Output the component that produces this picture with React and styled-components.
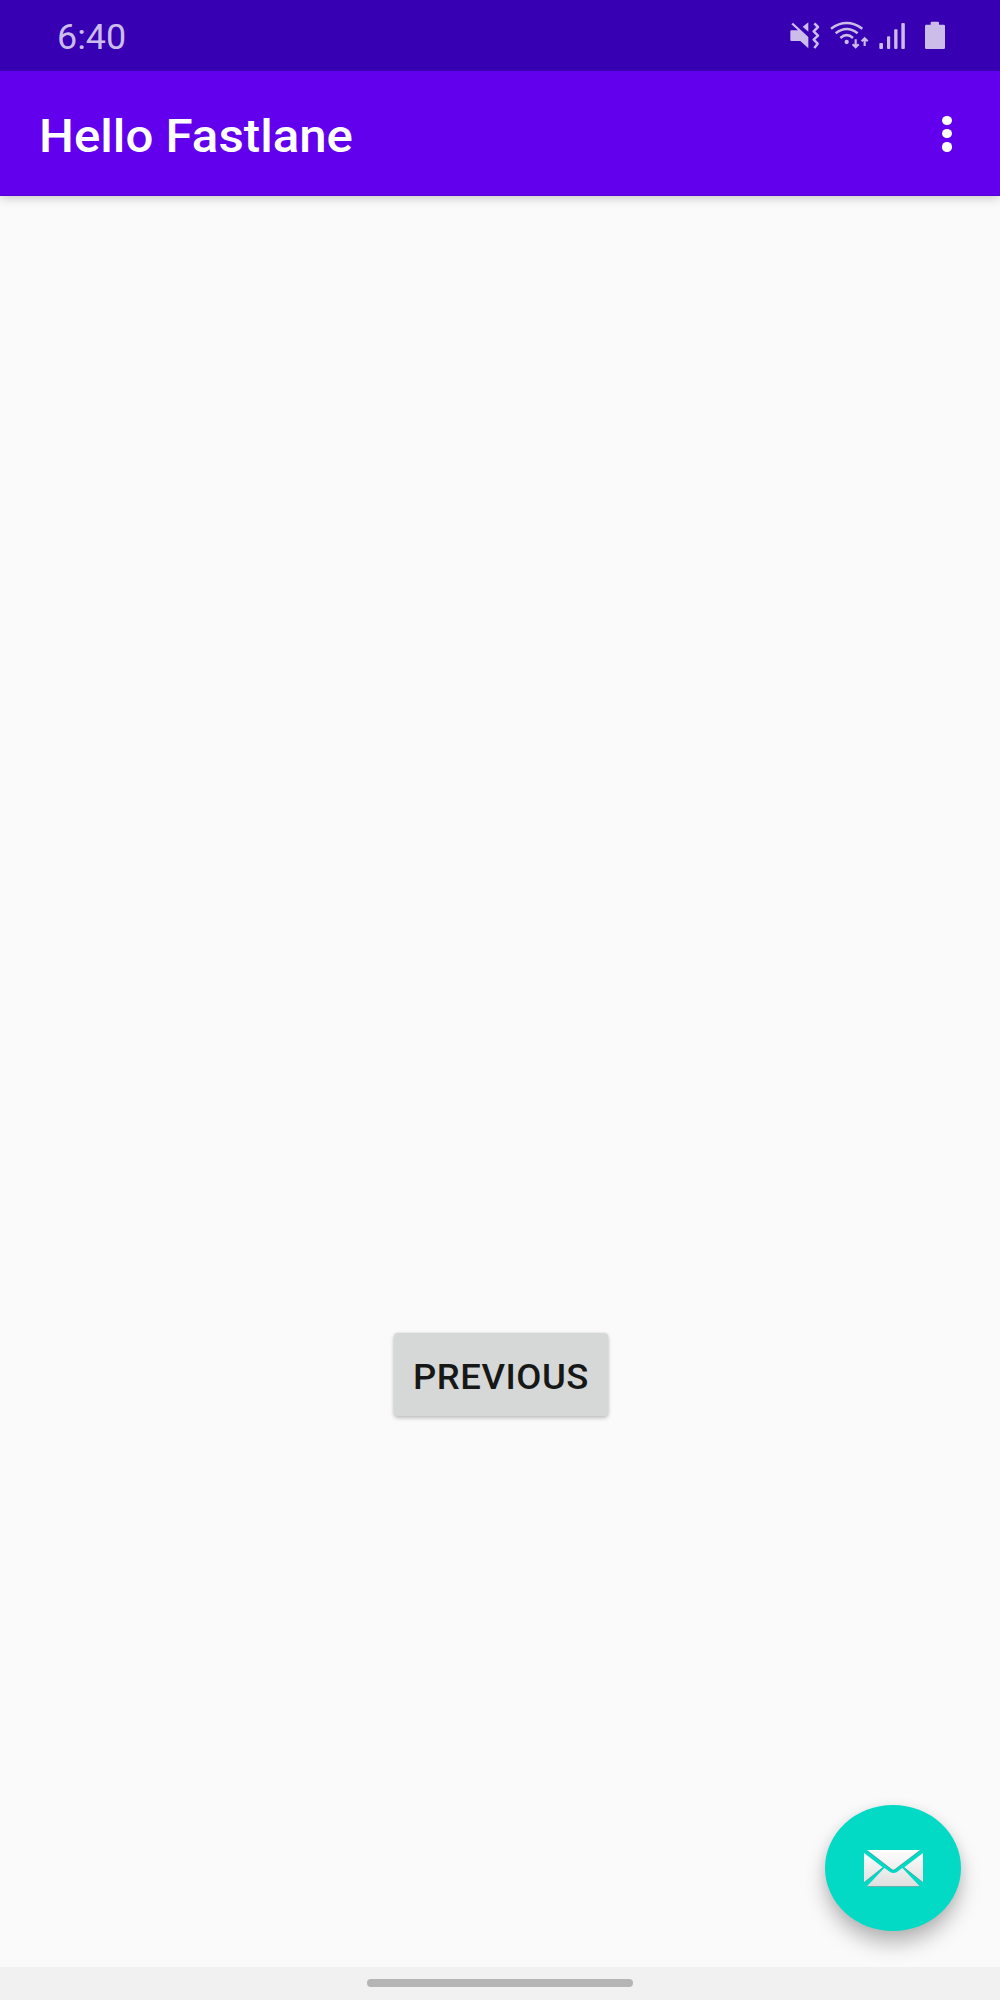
import React from 'react';
import styled, { createGlobalStyle } from 'styled-components';

const GlobalStyle = createGlobalStyle`
  *, *::before, *::after { box-sizing: border-box; }
  body { margin: 0; background: #fafafa; font-family: Roboto, "Liberation Sans", sans-serif; }
`;

const Screen = styled.div`
  display: flex;
  flex-direction: column;
  width: 1000px;
  height: 2000px;
  overflow: hidden;
  background: #fafafa;
`;

const StatusBar = styled.header`
  display: flex;
  flex: none;
  align-items: flex-start;
  justify-content: space-between;
  height: 71px;
  padding: 17px 54px 0 56.5px;
  background: #3700b3;
  color: #cbbcea;
`;

const Stretched = styled.span`
  display: inline-block;
  white-space: nowrap;
  transform: scaleX(${(p) => p.$x});
  transform-origin: ${(p) => p.$origin || 'left'} center;
`;

const Clock = styled.div`
  font-size: 34.5px;
  line-height: 40px;
`;

const StatusIcons = styled.div`
  display: flex;
  height: 32px;
  margin-top: 3px;
`;

const Icon = styled.svg`
  display: block;
  flex: none;
  width: ${(p) => p.$w}px;
  height: ${(p) => p.$h}px;
  margin-left: ${(p) => p.$gap || 0}px;
`;

const AppBar = styled.div`
  display: flex;
  flex: none;
  align-items: center;
  justify-content: space-between;
  height: 125px;
  padding: 0 48px 0 39px;
  background: #6200ee;
  border-bottom: 1px solid #4f04d4;
  box-shadow: 0 2px 10px rgba(0, 0, 0, 0.2);
  clip-path: inset(0 0 -20px 0);
`;

const Title = styled.h1`
  margin: 5px 0 0;
  color: #fff;
  font-size: 46.8px;
  font-weight: 500;
  line-height: 56px;
`;

const MenuButton = styled.button`
  display: flex;
  flex-direction: column;
  gap: 4px;
  margin-top: 1.5px;
  padding: 0;
  border: 0;
  background: none;
`;

const Dot = styled.span`
  width: 10.4px;
  height: 9.4px;
  border-radius: 50%;
  background: #fff;
`;

const Content = styled.main`
  display: flex;
  flex: 1;
  flex-direction: column;
  align-items: center;
  justify-content: space-between;
  padding: 1137.4px 39px 36px;
`;

const PreviousButton = styled.button`
  display: flex;
  align-items: center;
  justify-content: center;
  width: 214px;
  height: 82.5px;
  margin-left: 1px;
  padding: 4.5px 0 0;
  border: 0;
  border-radius: 4px;
  background: #d6d7d7;
  box-shadow: 0 2px 4px rgba(0, 0, 0, 0.24), 0 0 3px rgba(0, 0, 0, 0.08);
  color: #161717;
  font: 500 34.4px/42px Roboto, "Liberation Sans", sans-serif;
  letter-spacing: 0.5px;
`;

const Fab = styled.button`
  display: flex;
  align-items: center;
  justify-content: center;
  align-self: flex-end;
  width: 136px;
  height: 126px;
  padding: 2px 0 0;
  border: 0;
  border-radius: 50%;
  background: #03dac5;
  box-shadow: 0 13px 20px rgba(0, 0, 0, 0.25), 0 1px 12px rgba(0, 0, 0, 0.07);
`;

const NavigationBar = styled.footer`
  display: flex;
  flex: none;
  justify-content: center;
  height: 33px;
  padding-top: 12px;
  background: #f1f1f1;
`;

const GestureHandle = styled.div`
  width: 266px;
  height: 8px;
  border-radius: 4px;
  background: #b5b5b5;
`;

const MuteIcon = () => (
  <Icon $w={30} $h={32} viewBox="30 30 90 96" fill="currentColor">
    <path d="M39 38L85 81V115L61 93H34Q31 93 31 90V64Q31 61 34 61H54L34 43Z" />
    <path d="M68 50L85 37V65Z" />
    <path d="M103 40L114 51L101 64L114 77L101 89L113 101L103 114" fill="none" stroke="currentColor" strokeWidth="7.5" strokeLinejoin="round" />
  </Icon>
);

const WifiIcon = () => (
  <Icon $w={39} $h={32} $gap={10} viewBox="150 30 117 96" fill="none" stroke="currentColor" strokeWidth="7.5">
    <path d="M153 56Q200 22 247 56M167 70Q200 44 233 70M181 84Q200 67 219 84" />
    <circle cx="200" cy="96" r="6.5" fill="currentColor" stroke="none" />
    <path d="M227 88V112M218 103L227 112L236 103M254 108V84M245 94L254 85L263 94" strokeWidth="6.5" />
  </Icon>
);

const SignalIcon = () => (
  <Icon $w={29} $h={32} $gap={9} viewBox="24 30 87 96" fill="currentColor">
    <rect x="28" y="99" width="11" height="18" rx="3" />
    <rect x="51" y="79" width="9.5" height="38" rx="3" />
    <rect x="72.5" y="58" width="10" height="59" rx="3" />
    <rect x="94" y="39" width="10.5" height="78" rx="3" />
  </Icon>
);

const BatteryIcon = () => (
  <Icon $w={22} $h={32} $gap={17} viewBox="162 30 66 96" fill="currentColor">
    <path d="M182 38Q182 35 185 35H204Q207 35 207 38V44H221Q225 44 225 48V113Q225 117 221 117H169Q165 117 165 113V48Q165 44 169 44H182Z" />
  </Icon>
);

const MailIcon = () => (
  <Icon $w={61} $h={40} viewBox="38 42 183 120">
    <defs>
      <linearGradient id="paper" gradientUnits="userSpaceOnUse" x1="0" y1="45" x2="0" y2="154">
        <stop offset="0" stopColor="#ffffff" />
        <stop offset="1" stopColor="#dfdfdf" />
      </linearGradient>
    </defs>
    <g fill="#4f8f88" opacity="0.75" transform="translate(0 2)">
      <path d="M50 45H209L134 102Q129 106 124 102Z" />
      <path d="M41 54L97 97L41 142ZM218 54V142L162 97Z" />
      <path d="M102 99L119 111Q129 117 140 111L156 99L208 154H50Z" />
    </g>
    <g fill="url(#paper)">
      <path d="M50 45H209L134 102Q129 106 124 102Z" />
      <path d="M41 54L97 97L41 142ZM218 54V142L162 97Z" />
      <path d="M102 99L119 111Q129 117 140 111L156 99L208 154H50Z" />
    </g>
  </Icon>
);

export default function App() {
  return (
    <>
      <GlobalStyle />
      <Screen>
        <StatusBar>
          <Clock><Stretched $x={1.04}>6:40</Stretched></Clock>
          <StatusIcons>
            <MuteIcon />
            <WifiIcon />
            <SignalIcon />
            <BatteryIcon />
          </StatusIcons>
        </StatusBar>
        <AppBar>
          <Title><Stretched $x={1.052}>Hello Fastlane</Stretched></Title>
          <MenuButton aria-label="More options"><Dot /><Dot /><Dot /></MenuButton>
        </AppBar>
        <Content>
          <PreviousButton><Stretched $x={1.06} $origin="center">PREVIOUS</Stretched></PreviousButton>
          <Fab aria-label="Mail"><MailIcon /></Fab>
        </Content>
        <NavigationBar><GestureHandle /></NavigationBar>
      </Screen>
    </>
  );
}
